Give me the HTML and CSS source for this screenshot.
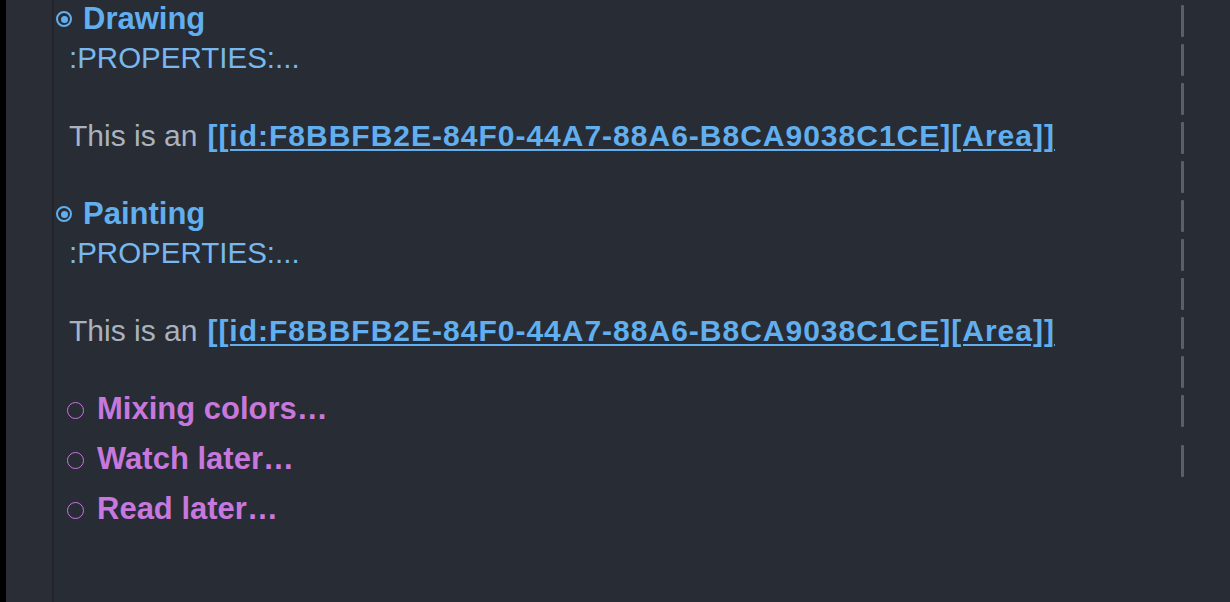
FILE: index.html
```html
<!DOCTYPE html>
<html>
<head>
<meta charset="utf-8">
<link rel="stylesheet" href="styles.css">
</head>
<body>
<div class="screen">
  <div class="strip"></div>
  <div class="gutter"></div>
  <div class="editor">
    <div class="line"><div class="text heading"><span class="ring"><span class="dot"></span></span><span class="h-blue">Drawing</span></div><span class="fill"></span></div>
    <div class="line"><div class="text body"><span class="drawer">:PROPERTIES:...</span></div><span class="fill"></span></div>
    <div class="line"><div class="text"></div><span class="fill"></span></div>
    <div class="line"><div class="text body">This is an <a class="link">[[id:F8BBFB2E-84F0-44A7-88A6-B8CA9038C1CE][Area]]</a></div><span class="fill"></span></div>
    <div class="line"><div class="text"></div><span class="fill"></span></div>
    <div class="line"><div class="text heading"><span class="ring"><span class="dot"></span></span><span class="h-blue">Painting</span></div><span class="fill"></span></div>
    <div class="line"><div class="text body"><span class="drawer">:PROPERTIES:...</span></div><span class="fill"></span></div>
    <div class="line"><div class="text"></div><span class="fill"></span></div>
    <div class="line"><div class="text body">This is an <a class="link">[[id:F8BBFB2E-84F0-44A7-88A6-B8CA9038C1CE][Area]]</a></div><span class="fill"></span></div>
    <div class="line"><div class="text"></div><span class="fill"></span></div>
    <div class="line tall"><div class="text sub"><span class="circle"></span><span class="h-purple">Mixing colors…</span></div><span class="fill"></span></div>
    <div class="line tall"><div class="text sub"><span class="circle"></span><span class="h-purple">Watch later…</span></div><span class="fill"></span></div>
    <div class="line tall"><div class="text sub"><span class="circle"></span><span class="h-purple">Read later…</span></div></div>
  </div>
</div>
</body>
</html>
```

FILE: styles.css
```css
html, body {
  margin: 0;
  padding: 0;
  background: #282c34;
}
.screen {
  display: flex;
  width: 1230px;
  height: 602px;
  overflow: hidden;
  font-family: "Liberation Sans", Arial, sans-serif;
  background: #282c34;
}
.strip {
  width: 6px;
  background: #000;
  flex: none;
}
.gutter {
  width: 46px;
  flex: none;
  background: #2a2d35;
  border-right: 2px solid #202329;
}
.editor {
  flex: 1;
  padding-top: 2px;
  display: flex;
  flex-direction: column;
}
.line {
  height: 39px;
  display: grid;
  grid-template-columns: 1127px 3px;
  align-items: start;
}
.line.tall {
  height: 50px;
}
.text {
  display: flex;
  align-items: center;
  white-space: nowrap;
  height: 34px;
}
.fill {
  margin-top: 3px;
  height: 32px;
  width: 3px;
  background: #5a5f68;
  border-radius: 1px;
}
.heading {
  padding-left: 2px;
  font-size: 31px;
  line-height: 34px;
  height: 34px;
}
.ring {
  width: 16px;
  height: 16px;
  box-sizing: border-box;
  border: 2px solid #61afef;
  border-radius: 50%;
  display: flex;
  align-items: center;
  justify-content: center;
  margin-right: 11px;
  margin-top: 0;
  flex: none;
}
.dot {
  width: 7px;
  height: 7px;
  border-radius: 50%;
  background: #61afef;
}
.h-blue {
  color: #61afef;
  font-weight: bold;
}
.body {
  padding-left: 15px;
  font-size: 30px;
  line-height: 34px;
  color: #abb2bf;
}
.drawer {
  color: #79b8ef;
  font-size: 29.5px;
}
.link {
  color: #61afef;
  font-weight: bold;
  letter-spacing: 1px;
  text-decoration: underline;
  text-decoration-thickness: 2px;
  text-underline-offset: 3px;
  margin-left: 10px;
}
.sub {
  padding-left: 13px;
  font-size: 31px;
  line-height: 33px;
  height: 33px;
}
.circle {
  width: 17px;
  height: 17px;
  box-sizing: border-box;
  border: 1.8px solid #c678dd;
  border-radius: 50%;
  margin-right: 13px;
  margin-top: 3px;
  flex: none;
}
.h-purple {
  color: #c678dd;
  font-weight: bold;
}
```
